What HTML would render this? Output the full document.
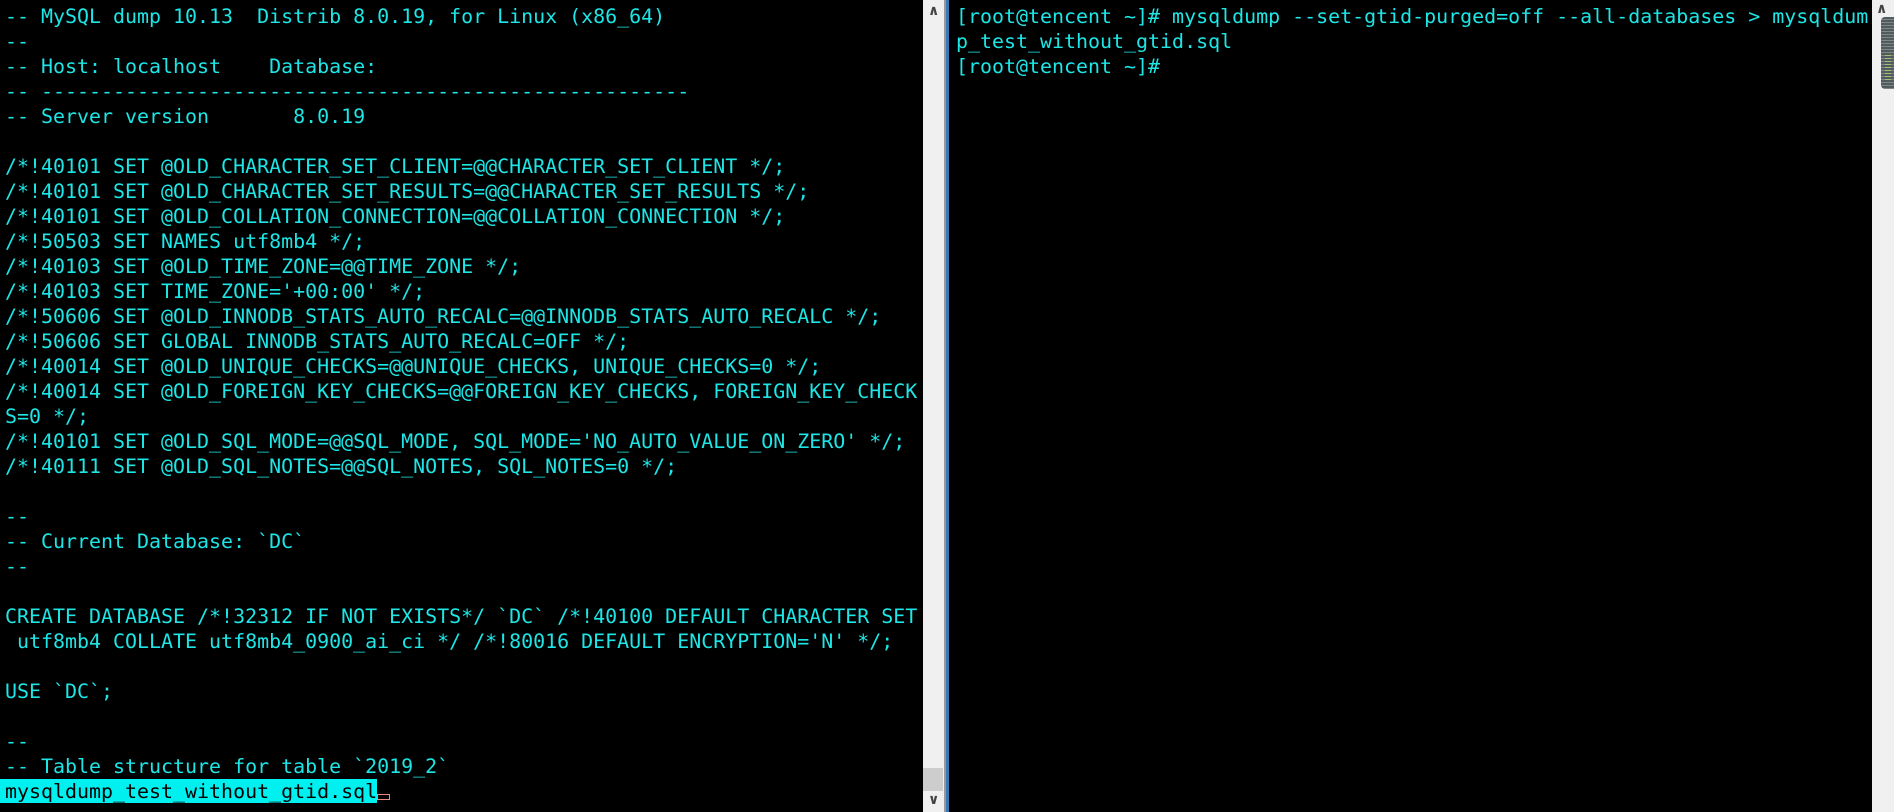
<!DOCTYPE html>
<html><head><meta charset="utf-8"><style>
html,body{margin:0;padding:0;width:1894px;height:812px;background:#000;overflow:hidden}
pre{margin:0;font-family:"DejaVu Sans Mono","Liberation Mono",monospace;font-size:19.95px;line-height:25px;color:#1ee6e6;white-space:pre;position:absolute}
#l{left:5px;top:4px}
#r{left:956px;top:4px}
.hl{background:#00f0f0;color:#000;padding-left:5px}
.cur{display:inline-block;width:11px;height:4px;border:1px solid #e88;vertical-align:-2px}
.sb{position:absolute;background:#f0f0f0}
.ar{position:absolute;font:bold 14px 'DejaVu Sans';color:#444}
</style></head><body>
<pre id="l">-- MySQL dump 10.13  Distrib 8.0.19, for Linux (x86_64)
--
-- Host: localhost    Database:
-- ------------------------------------------------------
-- Server version       8.0.19

/*!40101 SET @OLD_CHARACTER_SET_CLIENT=@@CHARACTER_SET_CLIENT */;
/*!40101 SET @OLD_CHARACTER_SET_RESULTS=@@CHARACTER_SET_RESULTS */;
/*!40101 SET @OLD_COLLATION_CONNECTION=@@COLLATION_CONNECTION */;
/*!50503 SET NAMES utf8mb4 */;
/*!40103 SET @OLD_TIME_ZONE=@@TIME_ZONE */;
/*!40103 SET TIME_ZONE='+00:00' */;
/*!50606 SET @OLD_INNODB_STATS_AUTO_RECALC=@@INNODB_STATS_AUTO_RECALC */;
/*!50606 SET GLOBAL INNODB_STATS_AUTO_RECALC=OFF */;
/*!40014 SET @OLD_UNIQUE_CHECKS=@@UNIQUE_CHECKS, UNIQUE_CHECKS=0 */;
/*!40014 SET @OLD_FOREIGN_KEY_CHECKS=@@FOREIGN_KEY_CHECKS, FOREIGN_KEY_CHECK
S=0 */;
/*!40101 SET @OLD_SQL_MODE=@@SQL_MODE, SQL_MODE='NO_AUTO_VALUE_ON_ZERO' */;
/*!40111 SET @OLD_SQL_NOTES=@@SQL_NOTES, SQL_NOTES=0 */;

--
-- Current Database: `DC`
--

CREATE DATABASE /*!32312 IF NOT EXISTS*/ `DC` /*!40100 DEFAULT CHARACTER SET
 utf8mb4 COLLATE utf8mb4_0900_ai_ci */ /*!80016 DEFAULT ENCRYPTION='N' */;

USE `DC`;

--
-- Table structure for table `2019_2`
</pre>
<pre style="left:0;top:779px"><span class="hl">mysqldump_test_without_gtid.sql</span><span class="cur"></span></pre>
<pre id="r">[root@tencent ~]# mysqldump --set-gtid-purged=off --all-databases &gt; mysqldum
p_test_without_gtid.sql
[root@tencent ~]#</pre>
<div class="sb" style="left:923px;top:0;width:21px;height:812px"></div>
<div style="position:absolute;left:944px;top:0;width:2px;height:812px;background:#999"></div>
<div style="position:absolute;left:946px;top:0;width:3px;height:812px;background:#3a78b8"></div>
<div style="position:absolute;left:923px;top:768px;width:20px;height:23px;background:#cdcdcd"></div>
<div class="ar" style="left:928px;top:3px">&#x2227;</div>
<div class="ar" style="left:928px;top:792px">&#x2228;</div>
<div class="sb" style="left:1872px;top:0;width:22px;height:812px"></div>
<div class="ar" style="left:1876px;top:1px">&#x2227;</div>
<div style="position:absolute;left:1881px;top:17px;width:13px;height:72px;background:#555a60;border-radius:4px 0 0 4px;background-image:repeating-linear-gradient(#555a60 0 2px,#7a8a80 2px 3px)"></div>
<div style="position:absolute;left:1885px;top:55px;width:6px;height:25px;background:repeating-linear-gradient(#9ec070 0 1px,transparent 1px 3px)"></div>
</body></html>
